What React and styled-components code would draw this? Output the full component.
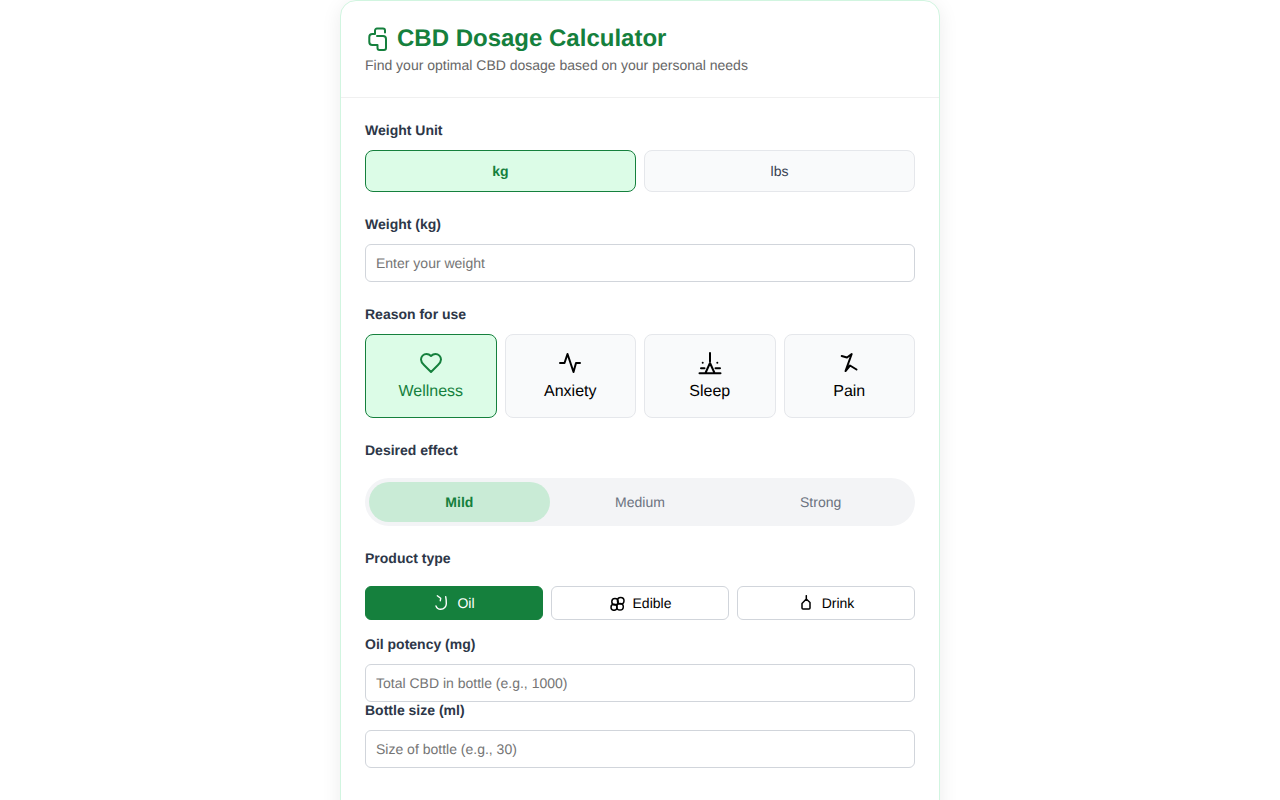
import React from 'react';
import styled, { createGlobalStyle } from 'styled-components';

const Global = createGlobalStyle`
  html, body { margin: 0; padding: 0; background: #fff; overflow: hidden; height: 800px; }
  body { font-family: "Liberation Sans", Arial, sans-serif; }
  * { box-sizing: border-box; text-rendering: geometricPrecision; }
  input::placeholder { color: #757575; opacity: 1; }
`;

const Card = styled.main`
  width: 600px; margin: 0 auto; background: #fff; border: 1px solid #d1f5e0; border-radius: 16px;
  box-shadow: 0 4px 20px rgba(0,0,0,0.08);
`;
const Header = styled.header`
  height: 97px; padding: 24px 24px 0; border-bottom: 1px solid #f0f0f0;
`;
const Title = styled.h1`
  margin: 0; display: flex; align-items: center; gap: 8px; font-size: 24px; line-height: 28px; font-weight: 700; color: #15803d;
`;
const Subtitle = styled.p`
  margin: 3px 0 0; font-size: 14px; line-height: 18px; color: #666;
`;
const Body = styled.div`
  padding: 24px 24px 80px; 
`;
const Section = styled.section`
  margin-bottom: ${p => p.$mb ?? 24}px;
`;
const Label = styled.label`
  display: block; margin-bottom: ${p => p.$mb ?? 8}px; font-size: 14px; line-height: 16px; height: 20px; font-weight: 700; color: #2d3748;
`;
const UnitRow = styled.div`
  display: grid; grid-template-columns: 1fr 1fr; gap: 8px;
`;
const UnitButton = styled.button`
  height: 42px; border-radius: 8px; font: ${p => p.$on ? 700 : 400} 14px "Liberation Sans", sans-serif;
  border: 1px solid ${p => p.$on ? '#15803d' : '#e5e7eb'};
  background: ${p => p.$on ? '#dcfce7' : '#f9fafb'};
  color: ${p => p.$on ? '#15803d' : '#374151'};
`;
const TextInput = styled.input`
  display: block; width: 100%; height: 38px; padding: 0 10px; border: 1px solid #d1d5db; border-radius: 6px;
  font: 14px "Liberation Sans", sans-serif; background: #fff; outline: none;
`;
const ReasonGrid = styled.div`
  display: grid; grid-template-columns: repeat(4, 1fr); gap: 8px;
`;
const Reason = styled.button`
  height: 84px; border-radius: 8px; padding: 0; display: flex; flex-direction: column; align-items: center; justify-content: center; gap: 8px;
  font: 16px/18px "Liberation Sans", sans-serif; 
  border: 1px solid ${p => p.$on ? '#15803d' : '#e5e7eb'};
  background: ${p => p.$on ? '#dcfce7' : '#f9fafb'};
  color: ${p => p.$on ? '#15803d' : '#000'};
`;
const Segments = styled.div`
  display: grid; grid-template-columns: repeat(3, 1fr); height: 48px; padding: 4px; background: #f3f4f6; border-radius: 24px;
`;
const Segment = styled.div`
  display: flex; align-items: center; justify-content: center; border-radius: 20px; font-size: 14px;
  font-weight: ${p => p.$on ? 700 : 400};
  color: ${p => p.$on ? '#15803d' : '#6b7280'};
  background: ${p => p.$on ? '#c9ebd6' : 'transparent'};
`;
const ProductRow = styled.div`
  display: grid; grid-template-columns: repeat(3, 1fr); gap: 8px;
`;
const Product = styled.button`
  height: 34px; border-radius: 6px; padding: 0; display: flex; align-items: center; justify-content: center; gap: 8px;
  font: 14px "Liberation Sans", sans-serif;
  border: 1px solid ${p => p.$on ? '#15803d' : '#d1d5db'};
  background: ${p => p.$on ? '#15803d' : '#fff'};
  color: ${p => p.$on ? '#fff' : '#000'};
`;
const Icon = styled.svg`
  display: block; flex: none; fill: none; stroke: currentColor; stroke-width: ${p => p.$w ?? 2}; stroke-linecap: round; stroke-linejoin: round;
`;

const Logo = () => (
  <Icon width="24" height="24" viewBox="0 0 24 24">
    <path d="M20 5.500V3.500a2 2 0 0 0-2-2h-6a2 2 0 0 0-2 2V7H7.300a3 3 0 0 0-3 3v5a3 3 0 0 0 3 3h5.200v3a2 2 0 0 0 2 2H19a2 2 0 0 0 2-2v-9a3 3 0 0 0-3-3h-6" />
  </Icon>
);
const Heart = () => (
  <Icon width="24" height="24" viewBox="0 0 24 24">
    <path d="M19 14c1.49-1.46 3-3.21 3-5.500A5.500 5.500 0 0 0 16.500 3c-1.760 0-3 .5-4.500 2-1.500-1.500-2.740-2-4.500-2A5.500 5.500 0 0 0 2 8.500c0 2.300 1.500 4.050 3 5.500l7 7Z" />
  </Icon>
);
const Pulse = () => (
  <Icon width="24" height="24" viewBox="0 0 24 24">
    <path d="M2 12h4.500l3-9 6 18 2.500-9h4" />
  </Icon>
);
const Moon = () => (
  <Icon width="24" height="24" viewBox="0 0 24 24">
    <path d="M12 2v8.500M12 12l-4.300 9.500M12 12l4.300 9.500M1.500 22.300h21M3 17.300h3.500M17.500 17.300H22M4.700 11.700h.01M19.300 11.700h.01" />
  </Icon>
);
const Bolt = () => (
  <Icon width="24" height="24" viewBox="0 0 24 24">
    <path d="M4.700 5l5.300 1.500L14.700 3 8.500 20l4.500-5.500 6.500 4" />
  </Icon>
);
const Drop = () => (
  <Icon width="16" height="16" viewBox="0 0 16 16" $w={1.4}>
    <path d="M3 11A5 5 0 0 0 7.700 14.300 5.600 5.600 0 0 0 13.300 8.300c0-2.300-.2-4.500-.6-6.600M4.300.8 7.700 3.300 7.300 5.700" />
  </Icon>
);
const Candy = () => (
  <Icon width="16" height="16" viewBox="0 0 16 16" $w={1.5}>
    <circle cx="6" cy="6.700" r="3.200" />
    <circle cx="11.700" cy="5.700" r="3.300" />
    <circle cx="5" cy="12.300" r="3" />
    <circle cx="11" cy="11.700" r="3.300" />
  </Icon>
);
const Bottle = () => (
  <Icon width="16" height="16" viewBox="0 0 16 16" $w={1.5}>
    <path d="M8.300.7V4M4 8.500 8.300 4l3.700 3.500V13a1 1 0 0 1-1 1H5a1 1 0 0 1-1-1Z" />
  </Icon>
);

export default function App() {
  return (
    <>
      <Global />
      <Card>
        <Header>
          <Title><Logo />CBD Dosage Calculator</Title>
          <Subtitle>Find your optimal CBD dosage based on your personal needs</Subtitle>
        </Header>
        <Body>
          <Section>
            <Label>Weight Unit</Label>
            <UnitRow>
              <UnitButton $on>kg</UnitButton>
              <UnitButton>lbs</UnitButton>
            </UnitRow>
          </Section>
          <Section>
            <Label>Weight (kg)</Label>
            <TextInput placeholder="Enter your weight" />
          </Section>
          <Section>
            <Label>Reason for use</Label>
            <ReasonGrid>
              <Reason $on><Heart />Wellness</Reason>
              <Reason><Pulse />Anxiety</Reason>
              <Reason><Moon />Sleep</Reason>
              <Reason><Bolt />Pain</Reason>
            </ReasonGrid>
          </Section>
          <Section>
            <Label $mb={16}>Desired effect</Label>
            <Segments>
              <Segment $on>Mild</Segment>
              <Segment>Medium</Segment>
              <Segment>Strong</Segment>
            </Segments>
          </Section>
          <Section $mb={16}>
            <Label $mb={16}>Product type</Label>
            <ProductRow>
              <Product $on><Drop />Oil</Product>
              <Product><Candy />Edible</Product>
              <Product><Bottle />Drink</Product>
            </ProductRow>
          </Section>
          <Section $mb={0}>
            <Label>Oil potency (mg)</Label>
            <TextInput placeholder="Total CBD in bottle (e.g., 1000)" />
          </Section>
          <Section $mb={0}>
            <Label>Bottle size (ml)</Label>
            <TextInput placeholder="Size of bottle (e.g., 30)" />
          </Section>
        </Body>
      </Card>
    </>
  );
}
